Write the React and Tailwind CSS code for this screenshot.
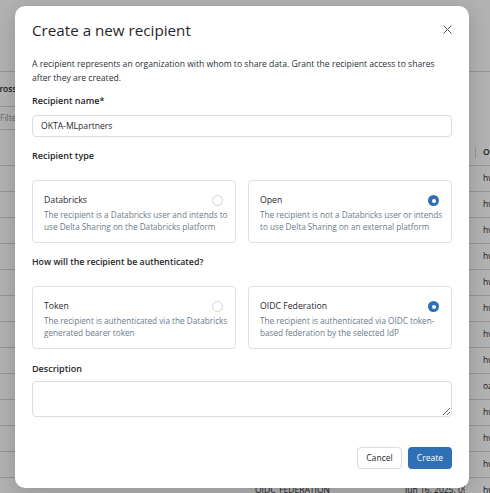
import React from "react";

const rows = [
  { type: "TOKEN", created: "Jun 20, 2025, 09:12 AM", owner: "hwang@example.com" },
  { type: "DATABRICKS", created: "Jun 19, 2025, 04:30 PM", owner: "hwang@example.com" },
  { type: "TOKEN", created: "Jun 19, 2025, 11:02 AM", owner: "hwang@example.com" },
  { type: "OIDC_FEDERATION", created: "Jun 18, 2025, 03:45 PM", owner: "hwang@example.com" },
  { type: "TOKEN", created: "Jun 18, 2025, 10:21 AM", owner: "hwang@example.com" },
  { type: "DATABRICKS", created: "Jun 17, 2025, 05:10 PM", owner: "hwang@example.com" },
  { type: "TOKEN", created: "Jun 17, 2025, 01:15 PM", owner: "hwang@example.com" },
  { type: "OIDC_FEDERATION", created: "Jun 17, 2025, 09:40 AM", owner: "hwang@example.com" },
  { type: "TOKEN", created: "Jun 16, 2025, 06:05 PM", owner: "oz@example.com" },
  { type: "DATABRICKS", created: "Jun 16, 2025, 04:22 PM", owner: "hwang@example.com" },
  { type: "TOKEN", created: "Jun 16, 2025, 02:18 PM", owner: "hwang@example.com" },
  { type: "TOKEN", created: "Jun 16, 2025, 11:50 AM", owner: "hwang@example.com" },
  { type: "OIDC_FEDERATION", created: "Jun 16, 2025, 09:03 AM", owner: "hwang@example.com" },
];

function Page() {
  return (
    <div className="flex flex-col text-[8.5px] text-[#1f272d]">
      <div className="h-[72px] shrink-0 border-b border-[#cfd6dd]" />
      <div className="h-[34px] shrink-0 flex items-center">
        <span className="-ml-[6px] font-semibold whitespace-nowrap">Cross-platform recipients</span>
      </div>
      <div className="h-[24px] shrink-0 w-[200px] border-y border-[#cfd6dd] flex items-center">
        <span className="text-[#8a96a1] whitespace-nowrap">Filter recipients</span>
      </div>
      <div className="h-[10px] shrink-0" />
      <div className="h-[26px] shrink-0 grid grid-cols-[255px_150px_70px_1fr] items-center border-b border-[#cfd6dd] font-semibold">
        <div />
        <div>Authentication type</div>
        <div>Created at</div>
        <div className="flex items-center h-full">
          <div className="w-px h-[11px] bg-[#cfd6dd]" />
          <span className="pl-[7px] whitespace-nowrap">Owner</span>
        </div>
      </div>
      {rows.map((r, i) => (
        <div
          key={i}
          className="h-[26px] shrink-0 grid grid-cols-[255px_150px_70px_1fr] items-center border-b border-[#cfd6dd] whitespace-nowrap overflow-hidden"
        >
          <div />
          <div>{r.type}</div>
          <div className="w-[60px] overflow-hidden">{r.created}</div>
          <div className="pl-[8px]">{r.owner}</div>
        </div>
      ))}
    </div>
  );
}

function Radio({ checked }) {
  if (checked) {
    return (
      <span className="w-[11px] h-[11px] rounded-full bg-[#2f6fb5] flex items-center justify-center shrink-0">
        <span className="w-[4px] h-[4px] rounded-full bg-white" />
      </span>
    );
  }
  return <span className="w-[11px] h-[11px] rounded-full border border-[#ccd3da] bg-white shrink-0" />;
}

function Card({ title, lines, checked }) {
  return (
    <div className="h-[63px] border border-[#dce2e8] rounded-[4px] pt-[12px] pl-[11px] pr-[12px] flex flex-col">
      <div className="flex items-center justify-between h-[15px]">
        <span className="text-[8.7px] text-[#1f272d] leading-[15px]">{title}</span>
        <Radio checked={checked} />
      </div>
      <div className="mt-[1px] text-[8.2px] leading-[11.5px] text-[#6b7b8a]">
        {lines.map((l, i) => (
          <div key={i} className="whitespace-nowrap">{l}</div>
        ))}
      </div>
    </div>
  );
}

function Modal() {
  return (
    <div className="absolute left-[15px] top-[6px] w-[454px] h-[482px] bg-white rounded-[10px] shadow-[0_4px_20px_rgba(0,0,0,0.18)] px-[17px] pt-[12px] flex flex-col text-[#1f272d]">
      <div className="flex items-center justify-between h-[24px]">
        <h2 className="text-[15.2px] leading-[24px] font-normal">Create a new recipient</h2>
        <button className="w-[10px] h-[10px] flex items-center justify-center -mt-[2px]">
          <svg width="9" height="9" viewBox="0 0 9 9" fill="none">
            <path d="M0.5 0.5L8.5 8.5M8.5 0.5L0.5 8.5" stroke="#4d5a66" strokeWidth="1" />
          </svg>
        </button>
      </div>
      <p className="mt-[15px] text-[8.6px] leading-[14px] text-[#2a3238]">
        <span className="block whitespace-nowrap">
          A recipient represents an organization with whom to share data. Grant the recipient access to shares
        </span>
        <span className="block whitespace-nowrap">after they are created.</span>
      </p>
      <div className="mt-[9px] text-[9px] leading-[14px] font-semibold">Recipient name*</div>
      <div className="mt-[7px] h-[22px] border border-[#d6dde4] rounded-[4px] pl-[8px] flex items-center text-[8.6px]">
        OKTA-MLpartners
      </div>
      <div className="mt-[12px] text-[9px] leading-[14px] font-semibold">Recipient type</div>
      <div className="mt-[17px] grid grid-cols-2 gap-[12px]">
        <Card
          title="Databricks"
          lines={["The recipient is a Databricks user and intends to", "use Delta Sharing on the Databricks platform"]}
        />
        <Card
          title="Open"
          checked
          lines={["The recipient is not a Databricks user or intends", "to use Delta Sharing on an external platform"]}
        />
      </div>
      <div className="mt-[12px] text-[8.8px] leading-[14px] font-semibold">How will the recipient be authenticated?</div>
      <div className="mt-[17px] grid grid-cols-2 gap-[12px]">
        <Card
          title="Token"
          lines={["The recipient is authenticated via the Databricks", "generated bearer token"]}
        />
        <Card
          title="OIDC Federation"
          checked
          lines={["The recipient is authenticated via OIDC token-", "based federation by the selected IdP"]}
        />
      </div>
      <div className="mt-[13px] text-[9px] leading-[14px] font-semibold">Description</div>
      <textarea className="mt-[5px] h-[36px] w-full border border-[#d6dde4] rounded-[4px] outline-none text-[8.5px] p-[6px]" />
      <div className="mt-[30px] flex justify-end gap-[6px]">
        <button className="w-[45px] h-[22px] border border-[#d6dde4] rounded-[4px] bg-white text-[8.6px] text-[#1f272d] flex items-center justify-center">
          Cancel
        </button>
        <button className="w-[44px] h-[22px] rounded-[4px] bg-[#2f6fb5] text-[8.6px] text-white flex items-center justify-center">
          Create
        </button>
      </div>
    </div>
  );
}

export default function App() {
  return (
    <div className="relative w-[490px] h-[493px] overflow-hidden bg-white font-['Open_Sans',sans-serif]">
      <Page />
      <div className="absolute inset-0 bg-black/30" />
      <Modal />
    </div>
  );
}
